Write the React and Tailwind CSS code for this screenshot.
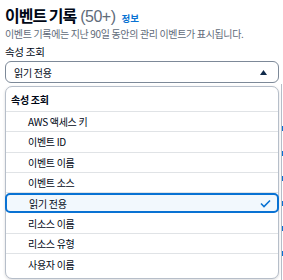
import React from 'react';

const items = ['AWS 액세스 키', '이벤트 ID', '이벤트 이름', '이벤트 소스', '읽기 전용', '리소스 이름', '리소스 유형', '사용자 이름'];

export default function App() {
    const selected = '읽기 전용';

    return (
        <div
            className="relative w-[283px] h-[280px] bg-white overflow-hidden text-[#000716]"
            style={{ fontFamily: '"Noto Sans CJK KR", "Noto Sans", sans-serif' }}
        >
            {/* page content peeking out behind the dropdown */}
            <div className="absolute right-0 top-[84px] w-[2px] h-[196px] border-l border-[#b6bec9]">
                {[126, 151, 176, 201, 226, 251].map((y) => (
                    <div key={y} className="absolute left-0 w-[2px] h-[5px] bg-[#0972d3]" style={{ top: y - 84 }} />
                ))}
            </div>

            <div className="relative pl-[5px] pr-[4px] pt-[4px]">
                {/* Header */}
                <div className="flex items-baseline h-[22px]">
                    <h1 className="text-[16px] font-bold tracking-[-1px] leading-[22px]">이벤트 기록</h1>
                    <span className="ml-[4px] text-[16px] text-[#5f6b7a] tracking-[-0.5px] leading-[22px]" style={{ fontFamily: '"Liberation Sans", sans-serif' }}>(50+)</span>
                    <span className="ml-[6px] text-[9.5px] font-bold text-[#0972d3]">정보</span>
                </div>
                <p className="mt-[1px] text-[10px] text-[#5f6b7a] leading-[14px] tracking-[-0.35px]">
                    이벤트 기록에는 지난 90일 동안의 관리 이벤트가 표시됩니다.
                </p>

                {/* Select */}
                <div className="mt-[4px] text-[10.5px] leading-[14px] tracking-[-0.3px]">속성 조회</div>
                <div className="mt-[2px] h-[22px] border border-[#7d8998] rounded-[6px] flex items-center justify-between pl-[8px] pr-[11px]">
                    <span className="text-[10px] tracking-[-0.3px]">읽기 전용</span>
                    <svg width="7" height="5" viewBox="0 0 7 5">
                        <polygon points="3.5,0 7,5 0,5" fill="#0f2a4a" />
                    </svg>
                </div>

                {/* Dropdown */}
                <div className="mt-[3px] border border-[#b6bec9] rounded-[7px] shadow-[0_1px_3px_rgba(0,7,22,0.15)] bg-white pb-[4px]">
                    <div className="h-[25px] flex items-center pl-[5px] text-[10px] font-bold tracking-[-0.3px] border-b border-[#e0e3e6]">
                        속성 조회
                    </div>
                    {items.map((item, i) => {
                        const isSel = item === selected;
                        const isLast = i === items.length - 1;
                        return (
                            <div
                                key={item}
                                className={`h-[20.3px] flex items-center justify-between pr-[6px] text-[10px] tracking-[-0.3px] ${
                                    isSel
                                        ? 'bg-[#f2f8fd] border-2 border-[#0972d3] rounded-[5px] -mx-[1px] pl-[22px]'
                                        : isLast
                                            ? 'pl-[22px]'
                                            : 'pl-[22px] border-b border-[#e0e3e6]'
                                }`}
                            >
                                <span>{item}</span>
                                {isSel && (
                                    <svg width="11" height="9" viewBox="0 0 11 9">
                                        <polyline points="1,4.5 4,7.5 10,1.5" fill="none" stroke="#0972d3" strokeWidth="1.6" />
                                    </svg>
                                )}
                            </div>
                        );
                    })}
                </div>
            </div>
        </div>
    );
}
